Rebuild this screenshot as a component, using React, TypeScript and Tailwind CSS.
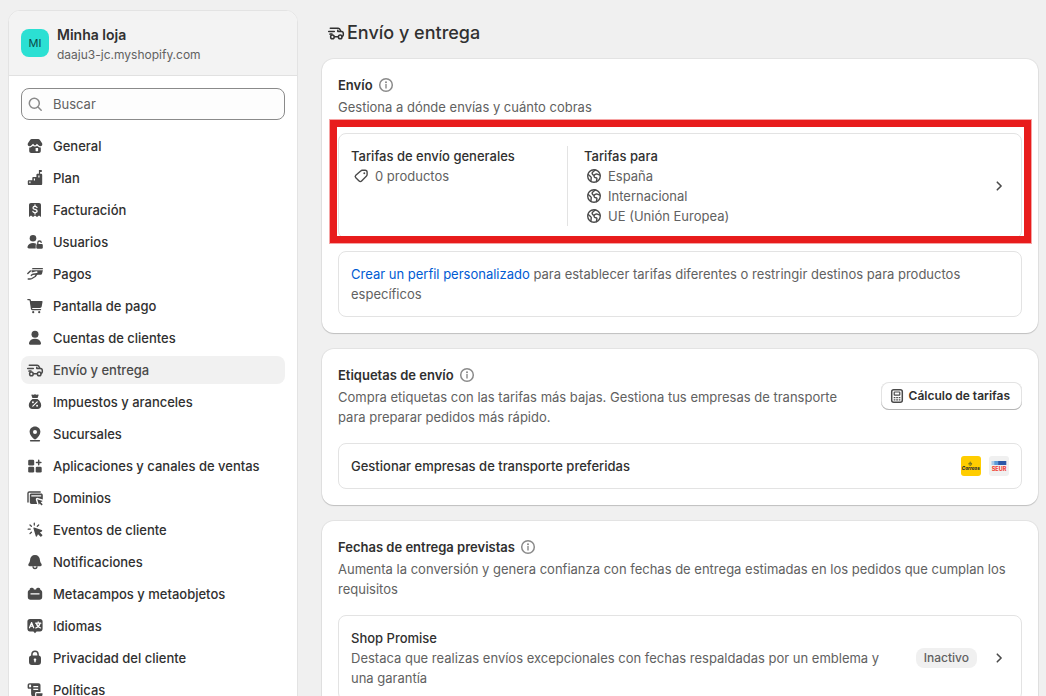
import React from "react";

type IconProps = { children: React.ReactNode; className?: string };

function Icon({ children, className = "text-[#4a4a4a]" }: IconProps) {
  return (
    <svg viewBox="0 0 20 20" className={`size-5 shrink-0 ${className}`} fill="currentColor" aria-hidden="true">
      {children}
    </svg>
  );
}

const stroke = {
  fill: "none",
  stroke: "currentColor",
  strokeWidth: 1.5,
  strokeLinecap: "round" as const,
  strokeLinejoin: "round" as const,
};

const truck = (
  <g {...stroke}>
    <path d="M4.3 5.3h7.9c.8 0 1.4.4 1.700 1.100l.9 1.900 1.500.5c.6.2 1 .8 1 1.400v1.500c0 .9-.4 1.400-1 1.700" />
    <path d="M2.700 8.400h5.600M4 11.200V11h2M8.600 13.800h3.600M14.600 8.400h-2.800V7.200" />
    <circle cx="6.400" cy="13.900" r="1.800" />
    <circle cx="14.200" cy="13.900" r="1.800" />
  </g>
);

const globe = (
  <g {...stroke} strokeWidth={1.4}>
    <circle cx="10" cy="10" r="6.300" />
    <path d="m4.200 8.500 2.600 2.200c.5.4.6.8.4 1.400l-.3 3.200M11.200 4 8.600 6.300c-.7.7-.6 1.500.1 2.100l.6.600M16 9.200l-2.700-1c-1.500-.5-3 .3-3.200 1.600-.2 1.200.7 1.800 1.800 1.900.9.100 1.200.5 1 1.300l-.5 2.500" />
  </g>
);

const info = (
  <>
    <circle cx="10" cy="10" r="6.300" fill="none" stroke="currentColor" strokeWidth="1.500" />
    <circle cx="10" cy="7.200" r="1" />
    <path d="M9.300 9h1.400v4.400H9.300z" />
  </>
);

const chevron = <path {...stroke} strokeWidth={1.6} d="m8.300 6.200 3.800 3.800-3.800 3.800" />;

type NavItem = { label: string; icon: React.ReactNode; active?: boolean };

const navItems: NavItem[] = [
  {
    label: "General",
    icon: (
      <>
        <path d="M7.300 3h5.400c1 0 1.700.3 2.200 1.100l2.200 3.200c.6 1.300 0 3-1.700 3-.8 0-1.400-.3-1.900-1l-1.600-1.500-1 1.200c-.5.600-1.300.600-1.800 0l-1-1.200-1.600 1.500c-.500.7-1.100 1-1.900 1-1.700 0-2.300-1.700-1.700-3l2.200-3.200C5.600 3.300 6.300 3 7.300 3Z" />
        <path
          fillRule="evenodd"
          d="M4.200 11.500c1.100.1 2-.2 2.800-.9l1-.9c1.100 1.200 2.900 1.200 4 0l1 .9c.8.7 1.700 1 2.800.9V15c0 1.300-.8 2-2 2H6.200c-1.200 0-2-.7-2-2v-3.500Zm6.400.8v2.500c0 .2.100.4.4.4h1.700c.2 0 .4-.2.4-.4v-2.500c0-.2-.2-.4-.4-.4H11c-.3 0-.4.2-.4.4Z"
        />
      </>
    ),
  },
  {
    label: "Plan",
    icon: (
      <>
        <path
          fillRule="evenodd"
          d="M14 5.800h2c.8 0 1.200.4 1.200 1.200v8.800c0 .8-.4 1.200-1.200 1.200H4c-.8 0-1.200-.4-1.200-1.200V13.500c0-.8.4-1.200 1.200-1.200h3.300V10.300c0-.8.4-1.200 1.200-1.200h2.900V7c0-.8.4-1.200 1.200-1.200H14ZM4.300 13.400v1.800h1.200v-1.800H4.300Zm4.500-2.800v2h1.200v-2H8.800Zm4.500-3v2h1.200v-2h-1.200Z"
        />
        <path d="M13.900 1.900h3.300L16.400 3l.8 1.100h-2.100v1.800h-1.200z" />
      </>
    ),
  },
  {
    label: "Facturación",
    icon: (
      <>
        <path d="M6 3h8c1.200 0 2 .8 2 2v12l-2-1.400L12 17l-2-1.400L8 17l-2-1.400L4 17V5c0-1.200.8-2 2-2Z" />
        <path
          d="M12 7.500c-.3-.8-1-1.100-2-1.100-1.200 0-2 .5-2 1.500 0 2.200 4.100.9 4.100 3.200 0 1-.9 1.500-2.100 1.500-1.100 0-1.900-.4-2.100-1.300M10 5v1.300M10 12.700V14"
          fill="none"
          stroke="#fff"
          strokeWidth="1.300"
          strokeLinecap="round"
        />
      </>
    ),
  },
  {
    label: "Usuarios",
    icon: (
      <>
        <circle cx="8" cy="6.300" r="3.300" />
        <path d="M8 10.900c1.200 0 2.300.3 3.200.8-.4.5-.5 1-.5 1.700V16.500H4c-1 0-1.700-.7-1.500-1.700.4-2.300 2.800-3.900 5.500-3.900Z" />
        <rect x="11.300" y="11.900" width="6.500" height="4.800" rx="1.200" />
        <path d="M12.800 12v-1.300c0-1 .7-1.700 1.700-1.700s1.700.6 1.700 1.400" fill="none" stroke="currentColor" strokeWidth="1.300" strokeLinecap="round" />
      </>
    ),
  },
  {
    label: "Pagos",
    icon: (
      <>
        <path d="M8.600 4h8.600c.5 0 .9.4.9.900v.3H6.700C7 4.500 7.700 4 8.600 4ZM6.300 6.300h11.600l-.8 3.200c-.2.800-.8 1.300-1.600 1.300h-5.200l2-2.100c.6-.8 0-1.700-.9-1.400L6.900 8.600z" />
        <path d="M2.800 9.600 5.400 6.900M3.200 15h1.400c.9 0 1.600-.1 2.300-.5l3.300-2L12 9.800 8.200 10.200c-.8.1-1.400.5-1.900 1.200" {...stroke} strokeWidth={1.400} />
      </>
    ),
  },
  {
    label: "Pantalla de pago",
    icon: (
      <>
        <path d="M5.300 5h11.500c.5 0 .8.4.7.9l-.8 4.700c-.1.8-.8 1.400-1.600 1.400H6.500z" />
        <path d="M2.900 3.600h1.300c.6 0 1 .3 1.100.9l1.300 8.300c.1.500.5.800 1 .8h7.900" {...stroke} strokeWidth={1.400} />
        <circle cx="8.200" cy="16.200" r="1.100" />
        <circle cx="14.200" cy="16.200" r="1.100" />
      </>
    ),
  },
  {
    label: "Cuentas de clientes",
    icon: (
      <>
        <circle cx="10" cy="6.300" r="3.500" />
        <path d="M10 10.800c3 0 5.500 1.600 6 4.100.2 1-.5 1.900-1.600 1.900H5.600c-1.100 0-1.800-.9-1.600-1.900.5-2.500 3-4.100 6-4.100Z" />
      </>
    ),
  },
  { label: "Envío y entrega", icon: truck, active: true },
  {
    label: "Impuestos y aranceles",
    icon: (
      <>
        <path d="M7.400 2.500c.8.3 1.300.2 1.900-.1.500-.200.900-.200 1.400 0 .6.300 1.100.4 1.900.1.700-.2 1.200.4.900 1.100L12.600 6H7.400L6.500 3.600c-.3-.7.200-1.300.9-1.100ZM7.500 7h5c2.200 1.600 3.700 4 3.700 6.300 0 2.300-1.500 3.700-3.700 3.700h-5c-2.200 0-3.700-1.400-3.700-3.700C3.800 11 5.300 8.600 7.500 7Z" />
        <path d="m7.800 14.100 4.400-4.200" stroke="#fff" strokeWidth="1.200" strokeLinecap="round" />
        <circle cx="7.900" cy="10.300" r=".95" fill="#fff" />
        <circle cx="12.100" cy="13.700" r=".95" fill="#fff" />
      </>
    ),
  },
  {
    label: "Sucursales",
    icon: (
      <>
        <path
          fillRule="evenodd"
          d="M10 2.500c3.100 0 5.400 2.300 5.400 5.300 0 3.300-2.700 5.600-4.400 7.300-.6.500-1.400.5-2 0-1.700-1.700-4.400-4-4.400-7.300 0-3 2.300-5.300 5.400-5.300Zm0 3.400a2 2 0 1 0 0 4 2 2 0 0 0 0-4Z"
        />
        <path d="M5.600 16.700h8.800" {...stroke} strokeWidth={1.400} />
      </>
    ),
  },
  {
    label: "Aplicaciones y canales de ventas",
    icon: (
      <>
        <rect x="3.200" y="3.700" width="6" height="5.800" rx="1.300" />
        <rect x="3.200" y="10.800" width="6" height="5.800" rx="1.300" />
        <rect x="10.700" y="10.800" width="6" height="5.800" rx="1.300" />
        <path d="M13.700 4.300v4.400M11.500 6.500h4.400" {...stroke} strokeWidth={1.500} />
      </>
    ),
  },
  {
    label: "Dominios",
    icon: (
      <>
        <path d="M3 14V5.300c0-.8.5-1.300 1.300-1.300h10.900" {...stroke} strokeWidth={1.400} />
        <path
          fillRule="evenodd"
          d="M6.500 5.500h9.600c1 0 1.700.7 1.700 1.700v4.300l-4.900-1.600c-1.300-.4-2.400.7-2 2l1.300 4H6.500c-1 0-1.700-.7-1.700-1.700V7.200c0-1 .7-1.700 1.700-1.700Zm-.2 1.800v1.200h9.900V7.300H6.300Z"
        />
        <path d="m12.200 11.200 5.600 1.900-2.100 1.200 2 2-1.100 1.100-2-2-.7 1.700z" />
      </>
    ),
  },
  {
    label: "Eventos de cliente",
    icon: (
      <>
        <path d="M8.400 8.300c-.2-.6.2-1 .8-.8l7.500 2.600c.7.200.7 1 .1 1.300l-1.900 1 2.300 2.300c.3.3.3.7 0 1l-.9.9c-.3.3-.7.3-1 0L13 14.300l-1 1.900c-.3.600-1.100.6-1.300-.1z" />
        <path d="M9.300 3.200v1.900M5 5l1.400 1.300M3.200 9.200h2M5 13.600l1.400-1.400M13.700 5l-1.400 1.300" {...stroke} strokeWidth={1.300} />
      </>
    ),
  },
  {
    label: "Notificaciones",
    icon: (
      <>
        <path d="M10 2.900c3 0 4.800 2.100 4.900 4.800.1 1.900.7 2.900 1.500 4 .8 1.200.1 2.500-1.200 2.500H4.800c-1.300 0-2-1.300-1.200-2.500.8-1.100 1.400-2.100 1.500-4C5.200 5 7 2.900 10 2.900Z" />
        <path d="M8 14.300c0 1.300.8 2.200 2 2.200s2-.9 2-2.200" fill="none" stroke="currentColor" strokeWidth="1.300" />
      </>
    ),
  },
  {
    label: "Metacampos y metaobjetos",
    icon: (
      <path
        fillRule="evenodd"
        d="M4.700 5.500c0-1.100.7-1.800 1.700-1.800h.8c1 0 1.700.7 1.700 1.800h2.200c0-1.100.7-1.800 1.700-1.800h.8c1 0 1.700.7 1.700 1.800v.3c1.200.4 1.900 1.300 1.900 2.600v4.700c0 1.700-1 2.700-2.700 2.700h-9c-1.700 0-2.700-1-2.700-2.700V8.400c0-1.300.7-2.200 1.900-2.600v-.3ZM5.500 9.300v1.200h9V9.300h-9Z"
      />
    ),
  },
  {
    label: "Idiomas",
    icon: (
      <>
        <path d="M5 3h10c1.600 0 2.600 1 2.600 2.600v7.200c0 1.600-1 2.600-2.600 2.600h-3.400L10 17.200l-1.600-1.800H5c-1.600 0-2.600-1-2.600-2.600V5.600C2.400 4 3.400 3 5 3Z" />
        <path
          d="m4.500 11.800 2.100-5.300 2.100 5.300M5.200 10.200h2.900M10.600 7.200h5.200M13.200 5.900v1.200M11.500 7.500c.5 2.100 1.900 3.700 4.100 4.500M14.900 7.500c-.5 2.100-1.900 3.700-4.100 4.500"
          fill="none"
          stroke="#fff"
          strokeWidth="1.200"
          strokeLinecap="round"
          strokeLinejoin="round"
        />
      </>
    ),
  },
  {
    label: "Privacidad del cliente",
    icon: (
      <>
        <path d="M6.900 8V6.400C6.900 4.500 8.100 3.300 10 3.300s3.100 1.200 3.100 3.100V8" fill="none" stroke="currentColor" strokeWidth="1.500" />
        <path
          fillRule="evenodd"
          d="M6.500 7.500h7c1.500 0 2.500 1 2.500 2.500v4c0 1.900-1.100 3-3 3H7c-1.900 0-3-1.100-3-3v-4c0-1.500 1-2.500 2.500-2.500Zm3.500 3c-.8 0-1.300.5-1.300 1.200 0 .4.2.8.6 1v1.100c0 .4.300.7.7.7s.7-.3.7-.7v-1.100c.4-.2.6-.6.6-1 0-.7-.5-1.200-1.300-1.200Z"
        />
      </>
    ),
  },
  {
    label: "Políticas",
    icon: (
      <>
        <path
          fillRule="evenodd"
          d="M4.700 3.200h8.800c1.200 0 2 .8 2 2v6.900h-3.900c-1 0-1.500.6-1.500 1.500v3.200c-2.400.2-4-.8-4-3V8.700H3.900c-.9 0-1.300-.4-1.300-1.300V5.300c0-1.300.8-2.100 2.100-2.100Zm-.6 2v2h2V5.300c0-.500-.3-.9-.9-.9-.6 0-1.100.3-1.100.8Zm4.200.8v1.200h4.900V6H8.300Zm0 2.800V10h4.900V8.800H8.300Z"
        />
        <path d="M11.300 13.300h6.200v1.200c0 1.400-1 2.300-2.400 2.300h-3.800z" />
      </>
    ),
  },
];

function Sidebar() {
  return (
    <aside className="w-[290px] shrink-0 overflow-y-auto pt-2.5 [scrollbar-width:none]">
      <div className="overflow-hidden rounded-t-xl border border-[#e3e3e3] bg-white pb-3">
        <header className="flex items-start gap-2 border-b border-[#e1e1e1] bg-[#f3f3f3] px-3 pt-3.5 pb-2.5">
          <span className="mt-1 flex size-7 items-center justify-center rounded-lg bg-[#2be0d3] text-[11px] text-[#0c4a47]">
            MI
          </span>
          <div className="leading-5">
            <p className="text-sm leading-5 font-semibold">Minha loja</p>
            <p className="text-xs leading-5 text-[#616161]">daaju3-jc.myshopify.com</p>
          </div>
        </header>
        <div className="px-3 pt-3">
          <label className="flex h-8 items-center gap-2 rounded-lg border border-[#8a8a8a] bg-[#fdfdfd] px-[3px]">
            <Icon className="text-[#8a8a8a]">
              <circle cx="9.300" cy="9.200" r="5" {...stroke} />
              <path d="m13 13 3.200 3.200" {...stroke} />
            </Icon>
            <input
              type="search"
              aria-label="Buscar"
              placeholder="Buscar"
              className="min-w-0 flex-1 bg-transparent text-[13px] outline-none placeholder:text-[#616161]"
            />
          </label>
          <nav className="mt-3">
            <ul className="flex flex-col gap-1">
              {navItems.map((item) => (
                <li key={item.label}>
                  <a
                    href="#"
                    aria-current={item.active ? "page" : undefined}
                    className={`flex h-7 items-center gap-2 rounded-lg px-1 font-[550] ${
                      item.active ? "bg-[#f1f1f1] text-[#4a4a4a]" : ""
                    }`}
                  >
                    <Icon>{item.icon}</Icon>
                    {item.label}
                  </a>
                </li>
              ))}
            </ul>
          </nav>
        </div>
      </div>
    </aside>
  );
}

function Card({ children }: { children: React.ReactNode }) {
  return (
    <section className="rounded-xl bg-white p-4 shadow-[0_1px_1px_rgba(0,0,0,0.16),0_0_0_1px_rgba(0,0,0,0.05)]">
      {children}
    </section>
  );
}

function CardHeading({ title, children }: { title: string; children: React.ReactNode }) {
  return (
    <div className="flex flex-col gap-0.5">
      <h2 className="flex items-center gap-[3px] font-semibold">
        {title}
        <Icon className="text-[#8a8a8a]">{info}</Icon>
      </h2>
      <p className="text-[#616161]">{children}</p>
    </div>
  );
}

const box = "rounded-lg border border-[#e3e3e3] p-3";

function CorreosLogo() {
  return (
    <svg viewBox="0 0 20 20" className="size-5" role="img" aria-label="Correos">
      <rect width="20" height="20" rx="3" fill="#ffcd00" />
      <g stroke="#6b6f22" fill="none" strokeWidth=".7">
        <circle cx="9.300" cy="8" r="1.400" />
        <path d="M9.300 5.500v4.300M7.500 7.500h3.600" />
      </g>
      <text x="9.800" y="13.800" textAnchor="middle" fontSize="4.500" fontWeight="800" fontStyle="italic" fill="#1d2a35">
        Correos
      </text>
    </svg>
  );
}

function SeurLogo() {
  return (
    <svg viewBox="0 0 20 20" className="size-5" role="img" aria-label="SEUR">
      <rect width="20" height="20" rx="3" fill="#f0f0f0" />
      <path d="M2.500 5h2.700v4H2.500z" fill="#a9cbea" />
      <path d="M5.200 5h3.900v4H5.200z" fill="#5b9bd8" />
      <path d="M9.100 5h8.200v4H9.100z" fill="#2c57a8" />
      <text x="10" y="14.600" textAnchor="middle" fontSize="5.500" fontWeight="800" fill="#f04438">
        SEUR
      </text>
    </svg>
  );
}

const zones = ["España", "Internacional", "UE (Unión Europea)"];

export default function App() {
  return (
    <div className="flex h-screen gap-6 overflow-hidden bg-[#f0f0f0] px-2 font-['Inter',sans-serif] text-[13px] leading-5 text-[#303030]">
      <Sidebar />
      <main className="-mx-2 min-w-0 flex-1 overflow-y-auto px-2 pt-5 pb-4 [scrollbar-width:none]">
        <h1 className="mb-[13px] flex items-center pl-1 text-lg leading-[26px] font-[550]">
          <Icon className="text-[#303030]">{truck}</Icon>
          <span className="pl-px">Envío y entrega</span>
        </h1>

        <div className="flex flex-col gap-4">
          <Card>
            <CardHeading title="Envío">Gestiona a dónde envías y cuánto cobras</CardHeading>
            <div className="relative mt-4">
              <a href="#" className={`grid grid-cols-[217px_1fr_auto] items-center ${box}`}>
                <div className="self-stretch border-r border-[#e3e3e3]">
                  <h3 className="font-[550]">Tarifas de envío generales</h3>
                  <p className="flex items-center gap-1 text-[#616161]">
                    <Icon>
                      <path
                        {...stroke}
                        strokeWidth={1.400}
                        d="M11.200 4.300h2.900c1.300 0 2 .7 2 2v2.200c0 .6-.2 1.100-.6 1.500l-4.900 5c-.8.8-1.700.8-2.500 0l-3.300-3.200c-.8-.8-.8-1.700 0-2.500l4.900-4.400c.4-.4.9-.6 1.500-.6Z"
                      />
                      <circle cx="13.300" cy="7.200" r=".95" />
                    </Icon>
                    0 productos
                  </p>
                </div>
                <div className="pl-4">
                  <h3 className="font-[450]">Tarifas para</h3>
                  <ul className="text-[#616161]">
                    {zones.map((zone) => (
                      <li key={zone} className="flex items-center gap-1">
                        <Icon>{globe}</Icon>
                        {zone}
                      </li>
                    ))}
                  </ul>
                </div>
                <Icon>{chevron}</Icon>
              </a>
              <div className="pointer-events-none absolute -top-[13px] -right-[9px] -bottom-1 -left-2 border-[7px] border-[#e81c1c] shadow-[0_0_0_1px_rgba(232,28,28,0.4)]" />
            </div>
            <p className={`mt-3 text-[#616161] ${box}`}>
              <a href="#" className="text-[#005bd3]">
                Crear un perfil personalizado
              </a>{" "}
              para establecer tarifas diferentes o restringir destinos para productos específicos
            </p>
          </Card>

          <Card>
            <div className="flex items-center justify-between gap-4">
              <CardHeading title="Etiquetas de envío">
                Compra etiquetas con las tarifas más bajas. Gestiona tus empresas de transporte para preparar pedidos
                más rápido.
              </CardHeading>
              <button
                type="button"
                className="flex h-7 shrink-0 items-center gap-0.5 rounded-lg bg-white pr-3 pl-1.5 text-xs font-semibold shadow-[inset_0_-1px_0_#b5b5b5,inset_0_0_0_1px_#e3e3e3]"
              >
                <Icon>
                  <rect x="4.700" y="3.700" width="10.600" height="12.600" rx="2" {...stroke} strokeWidth={1.500} />
                  <rect x="7.200" y="6" width="5.600" height="3.200" rx=".5" {...stroke} strokeWidth={1.200} />
                  <path d="M6.700 11h1.700v1.300H6.700zM9.200 11h1.700v1.300H9.200zM11.700 11h1.700v1.300h-1.700zM6.700 13.200h1.700v1.300H6.700zM9.200 13.200h1.700v1.300H9.200zM11.700 13.200h1.700v1.300h-1.700z" />
                </Icon>
                Cálculo de tarifas
              </button>
            </div>
            <a href="#" className={`mt-4 flex items-center gap-2 ${box}`}>
              <span className="flex-1 font-[550]">Gestionar empresas de transporte preferidas</span>
              <CorreosLogo />
              <SeurLogo />
            </a>
          </Card>

          <Card>
            <CardHeading title="Fechas de entrega previstas">
              Aumenta la conversión y genera confianza con fechas de entrega estimadas en los pedidos que cumplan los
              requisitos
            </CardHeading>
            <a href="#" className={`mt-4 flex items-center gap-3 ${box}`}>
              <div className="flex-1 pr-2">
                <h3 className="font-[450]">Shop Promise</h3>
                <p className="text-[#616161]">
                  Destaca que realizas envíos excepcionales con fechas respaldadas por un emblema y una garantía
                </p>
              </div>
              <span className="rounded-lg bg-[#f0f0f0] px-2 text-xs leading-5 font-[550] text-[#616161]">Inactivo</span>
              <Icon>{chevron}</Icon>
            </a>
          </Card>
        </div>
      </main>
    </div>
  );
}
